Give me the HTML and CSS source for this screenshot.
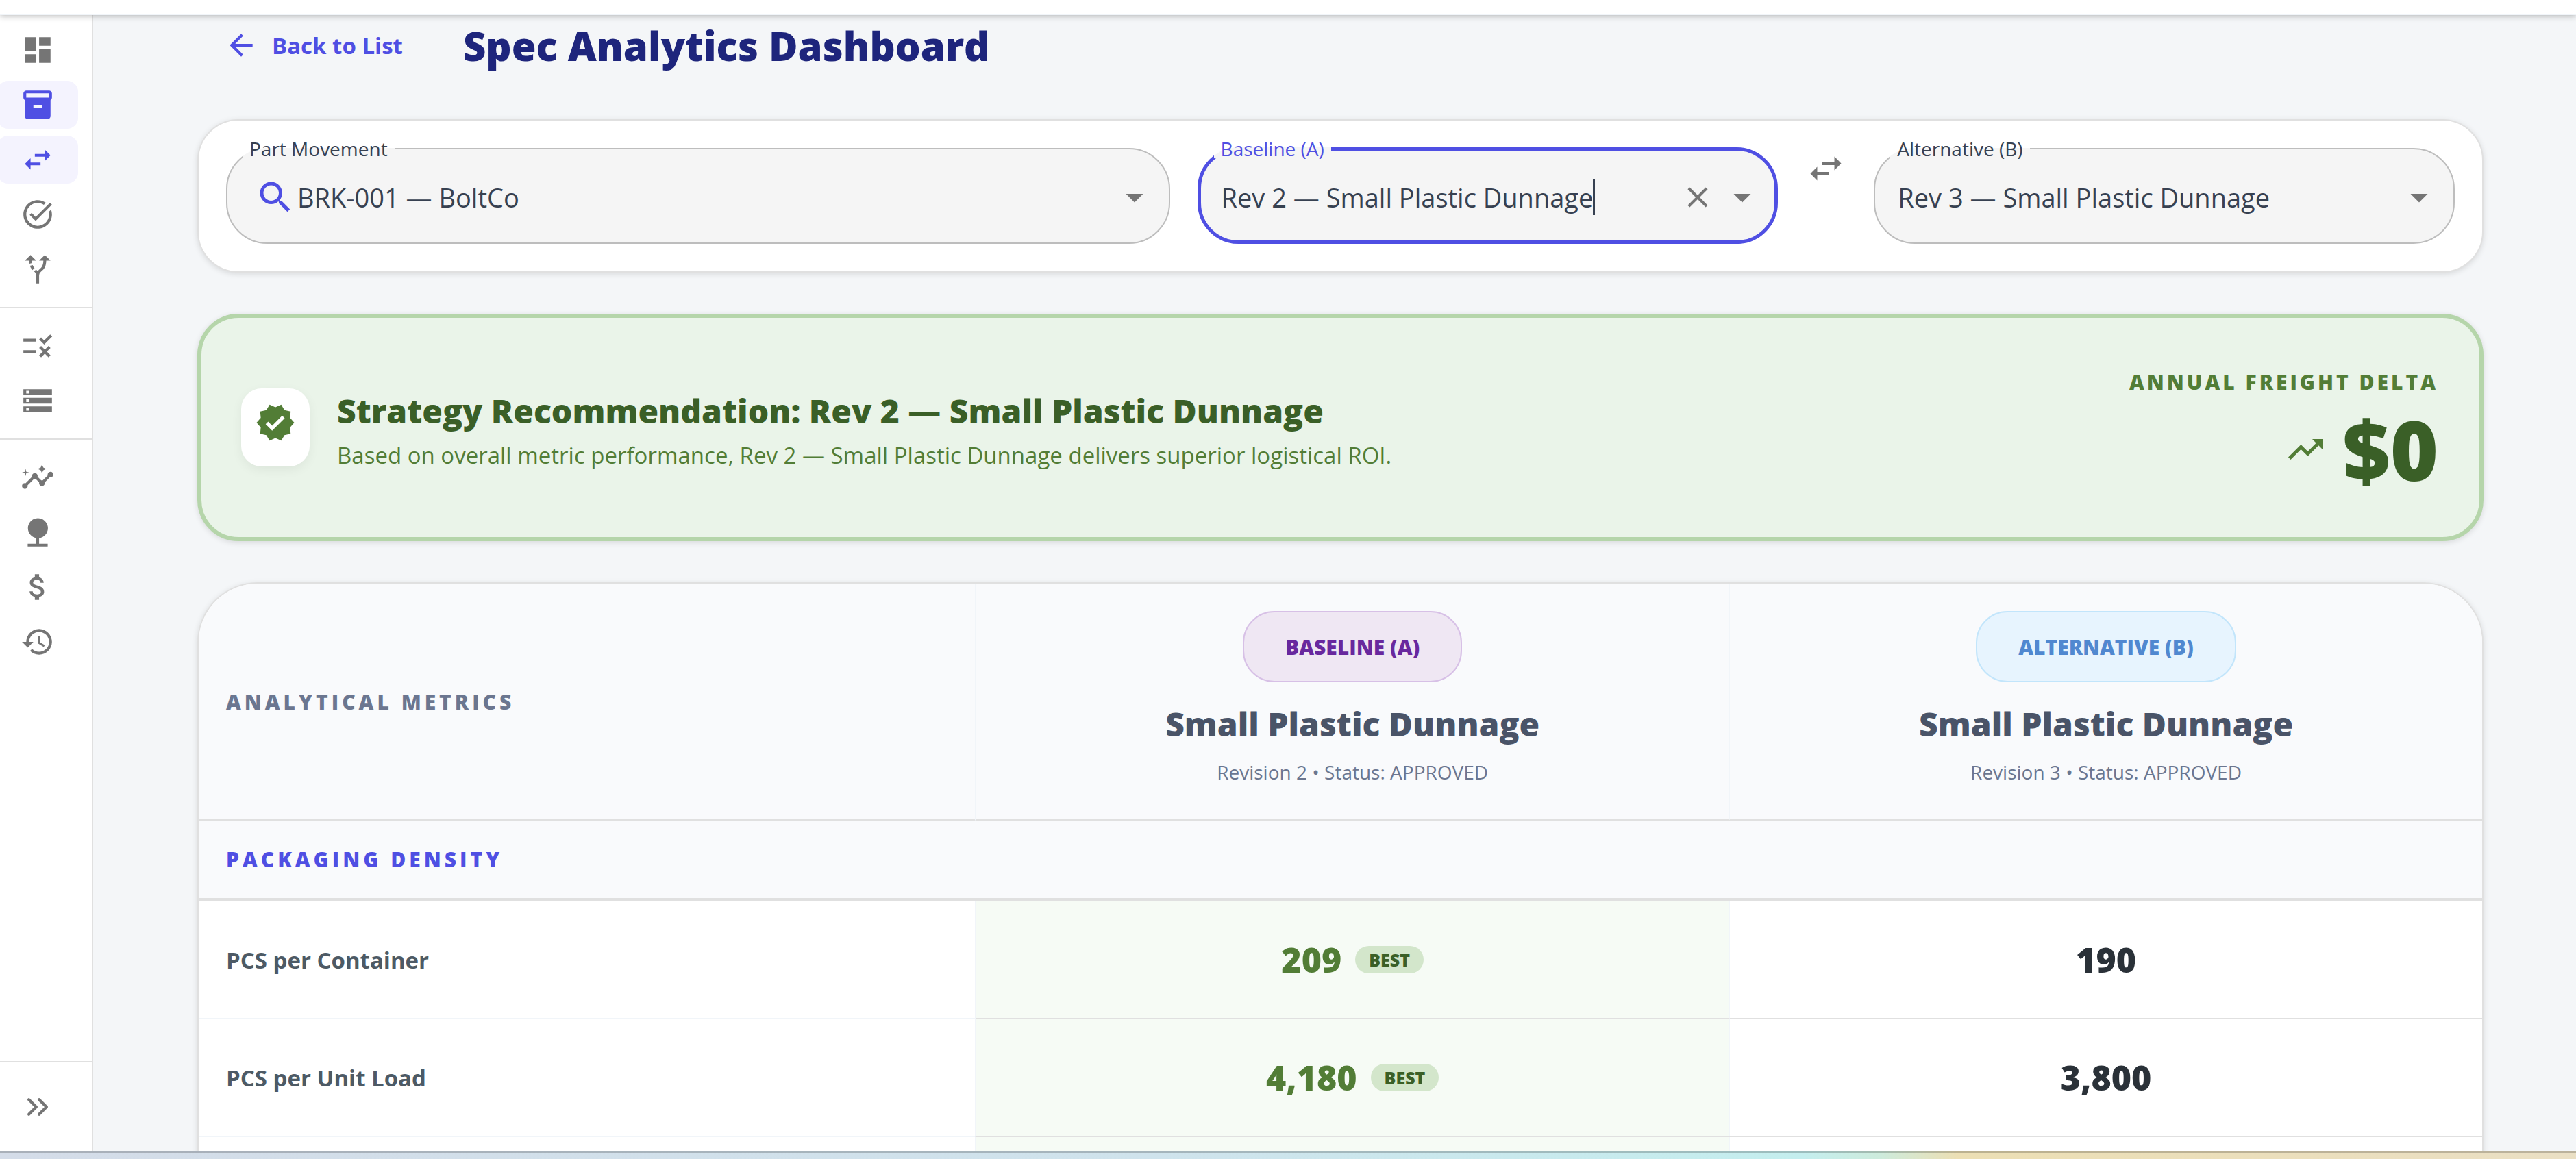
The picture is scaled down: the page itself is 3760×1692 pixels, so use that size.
FILE: index.html
```html
<!DOCTYPE html>
<html lang="en">
<head>
    <meta charset="UTF-8">
    <meta name="viewport" content="width=device-width, initial-scale=1.0">
    <title>Spec Analytics Dashboard</title>
    <link rel="stylesheet" href="styles.css">
</head>
<body>

    <header class="topbar"></header>

    <div class="shell">
        <!-- Collapsed sidebar -->
        <aside class="sidebar">
            <nav class="nav">
                <a href="#" class="nav-item" aria-label="Dashboard"><svg class="icon" viewBox="0 0 24 24"><path d="M3 13h8V3H3v10zm0 8h8v-6H3v6zm10 0h8V11h-8v10zm0-18v6h8V3h-8z"/></svg></a>
                <a href="#" class="nav-item active" aria-label="Packaging"><svg class="icon" viewBox="0 0 24 24"><path d="M20 2H4c-1 0-2 .9-2 2v3.01c0 .72.43 1.34 1 1.69V20c0 1.1 1.1 2 2 2h14c.9 0 2-.9 2-2V8.7c.57-.35 1-.97 1-1.69V4c0-1.1-1-2-2-2m-5 12H9v-2h6zm5-7H4V4l16-.02z"/></svg></a>
                <a href="#" class="nav-item active" aria-label="Compare"><svg class="icon" viewBox="0 0 24 24"><path d="M6.99 11 3 15l3.99 4v-3H14v-2H6.99v-3zM21 9l-3.99-4v3H10v2h7.01v3L21 9z"/></svg></a>
                <a href="#" class="nav-item" aria-label="Approvals"><svg class="icon" viewBox="0 0 24 24"><path d="M22 5.18 10.59 16.6l-4.24-4.24 1.41-1.41 2.83 2.83 10-10L22 5.18zm-2.21 5.04c.13.57.21 1.17.21 1.78 0 4.42-3.58 8-8 8s-8-3.58-8-8 3.58-8 8-8c1.58 0 3.04.46 4.28 1.25l1.44-1.44C16.1 2.67 14.13 2 12 2 6.48 2 2 6.48 2 12s4.48 10 10 10 10-4.48 10-10c0-1.19-.22-2.33-.6-3.39l-1.61 1.61z"/></svg></a>
                <a href="#" class="nav-item" aria-label="Routes"><svg class="icon" viewBox="0 0 24 24"><path d="m9.78 11.16-1.42 1.42c-.68-.69-1.34-1.58-1.79-2.94l1.94-.49c.32.89.77 1.5 1.27 2.01zM11 6 7 2 3 6h3.02c.02.81.08 1.54.19 2.17l1.94-.49C8.08 7.2 8.03 6.63 8.02 6H11zm10 0-4-4-4 4h2.99c-.1 3.68-1.28 4.75-2.54 5.88-.5.44-1.01.92-1.45 1.55-.34-.49-.73-.88-1.13-1.24L9.46 13.6c.93.85 1.54 1.54 1.54 3.4v5h2v-5c0-2.02.71-2.66 1.79-3.63 1.38-1.24 3.08-2.78 3.2-7.37H21z"/></svg></a>
            </nav>
            <nav class="nav">
                <a href="#" class="nav-item" aria-label="Rules"><svg class="icon" viewBox="0 0 24 24"><path d="M16.54 11 13 7.46l1.41-1.41 2.12 2.12 4.24-4.24 1.41 1.41L16.54 11zM11 7H2v2h9V7zm10 6.41L19.59 12 17 14.59 14.41 12 13 13.41 15.59 16 13 18.59 14.41 20 17 17.41 19.59 20 21 18.59 18.41 16 21 13.41zM11 15H2v2h9v-2z"/></svg></a>
                <a href="#" class="nav-item" aria-label="Storage"><svg class="icon" viewBox="0 0 24 24"><path d="M2 20h20v-4H2v4zm2-3h2v2H4v-2zM2 4v4h20V4H2zm4 3H4V5h2v2zm-4 7h20v-4H2v4zm2-3h2v2H4v-2z"/></svg></a>
            </nav>
            <nav class="nav">
                <a href="#" class="nav-item" aria-label="Insights"><svg class="icon" viewBox="0 0 24 24"><path d="M21 8c-1.45 0-2.26 1.44-1.93 2.51l-3.55 3.56c-.3-.09-.74-.09-1.04 0l-2.55-2.55C12.27 10.45 11.46 9 10 9c-1.45 0-2.27 1.44-1.93 2.52l-4.56 4.55C2.44 15.74 1 16.55 1 18c0 1.1.9 2 2 2 1.45 0 2.26-1.44 1.93-2.51l4.55-4.56c.3.09.74.09 1.04 0l2.55 2.55C12.73 16.55 13.54 18 15 18c1.45 0 2.27-1.44 1.93-2.52l3.56-3.55C21.56 12.26 23 11.45 23 10c0-1.1-.9-2-2-2z"/><path d="m15 9 .94-2.07L18 6l-2.06-.93L15 3l-.92 2.07L12 6l2.08.93zM3.5 11 4 9l2-.5L4 8l-.5-2L3 8l-2 .5L3 9z"/></svg></a>
                <a href="#" class="nav-item" aria-label="Sustainability"><svg class="icon" viewBox="0 0 24 24"><path d="M13 16.12c3.47-.41 6.17-3.36 6.17-6.95 0-3.87-3.13-7-7-7s-7 3.13-7 7c0 3.47 2.52 6.34 5.83 6.89V20H5v2h14v-2h-6v-3.88z"/></svg></a>
                <a href="#" class="nav-item" aria-label="Costs"><svg class="icon" viewBox="0 0 24 24"><path d="M11.8 10.9c-2.27-.59-3-1.2-3-2.15 0-1.09 1.01-1.85 2.7-1.85 1.78 0 2.44.85 2.5 2.1h2.21c-.07-1.72-1.12-3.3-3.21-3.81V3h-3v2.16c-1.94.42-3.5 1.68-3.5 3.61 0 2.31 1.91 3.46 4.7 4.13 2.5.6 3 1.48 3 2.41 0 .69-.49 1.79-2.7 1.79-2.06 0-2.87-.92-2.98-2.1h-2.2c.12 2.19 1.76 3.42 3.68 3.83V21h3v-2.15c1.95-.37 3.5-1.5 3.5-3.55 0-2.84-2.43-3.81-4.7-4.4z"/></svg></a>
                <a href="#" class="nav-item" aria-label="History"><svg class="icon" viewBox="0 0 24 24"><path d="M13 3c-4.97 0-9 4.03-9 9H1l3.89 3.89.07.14L9 12H6c0-3.87 3.13-7 7-7s7 3.13 7 7-3.13 7-7 7c-1.93 0-3.68-.79-4.94-2.06l-1.42 1.42C8.27 19.99 10.51 21 13 21c4.97 0 9-4.03 9-9s-4.03-9-9-9zm-1 5v5l4.28 2.54.72-1.21-3.5-2.08V8H12z"/></svg></a>
            </nav>
            <button type="button" class="expand" aria-label="Expand menu">
                <svg class="icon icon-line" viewBox="0 0 24 24"><path d="m5.8 6.8 5.2 5.2-5.2 5.2M13 6.8l5.2 5.2-5.2 5.2"/></svg>
            </button>
        </aside>

        <main class="main">
            <div class="page-head">
                <a href="#" class="back">
                    <svg class="icon" viewBox="0 0 24 24"><path d="M20 11H7.83l5.59-5.59L12 4l-8 8 8 8 1.41-1.41L7.83 13H20v-2z"/></svg>
                    Back to List
                </a>
                <h1>Spec Analytics Dashboard</h1>
            </div>

            <!-- Selectors -->
            <form class="card filters">
                <fieldset class="field">
                    <legend><label for="part">Part Movement</label></legend>
                    <div class="field-row with-icon">
                        <svg class="icon icon-lg search" viewBox="0 0 24 24"><path d="M15.5 14h-.79l-.28-.27C15.41 12.59 16 11.11 16 9.5 16 5.91 13.09 3 9.5 3S3 5.91 3 9.5 5.91 16 9.5 16c1.61 0 3.09-.59 4.23-1.57l.27.28v.79l5 4.99L20.49 19l-4.99-5zm-6 0C7.01 14 5 11.99 5 9.5S7.01 5 9.5 5 14 7.01 14 9.5 11.99 14 9.5 14z"/></svg>
                        <input type="text" id="part" value="BRK-001 — BoltCo">
                        <button type="button" class="icon-btn drop" aria-label="Open parts"><svg class="icon icon-lg" viewBox="0 0 24 24"><path d="m7 10 5 5 5-5z"/></svg></button>
                    </div>
                </fieldset>

                <fieldset class="field focused">
                    <legend><label for="baseline">Baseline (A)</label></legend>
                    <div class="field-row">
                        <input type="text" id="baseline" value="Rev 2 — Small Plastic Dunnage">
                        <span class="caret"></span>
                        <button type="button" class="icon-btn clear" aria-label="Clear"><svg class="icon" viewBox="0 0 24 24"><path d="M19 6.41 17.59 5 12 10.59 6.41 5 5 6.41 10.59 12 5 17.59 6.41 19 12 13.41 17.59 19 19 17.59 13.41 12z"/></svg></button>
                        <button type="button" class="icon-btn" aria-label="Open baselines"><svg class="icon icon-lg" viewBox="0 0 24 24"><path d="m7 10 5 5 5-5z"/></svg></button>
                    </div>
                </fieldset>

                <button type="button" class="icon-btn swap" aria-label="Swap A and B"><svg class="icon icon-lg" viewBox="0 0 24 24"><path d="M6.99 11 3 15l3.99 4v-3H14v-2H6.99v-3zM21 9l-3.99-4v3H10v2h7.01v3L21 9z"/></svg></button>

                <fieldset class="field">
                    <legend><label for="alternative">Alternative (B)</label></legend>
                    <div class="field-row">
                        <input type="text" id="alternative" value="Rev 3 — Small Plastic Dunnage">
                        <button type="button" class="icon-btn drop" aria-label="Open alternatives"><svg class="icon icon-lg" viewBox="0 0 24 24"><path d="m7 10 5 5 5-5z"/></svg></button>
                    </div>
                </fieldset>
            </form>

            <!-- Recommendation -->
            <section class="card recommend">
                <div class="badge-tile">
                    <svg class="icon icon-lg" viewBox="0 0 24 24"><path d="m23 12-2.44-2.79.34-3.69-3.61-.82-1.89-3.2L12 2.96 8.6 1.5 6.71 4.69 3.1 5.5l.34 3.7L1 12l2.44 2.79-.34 3.7 3.61.82L8.6 22.5l3.4-1.47 3.4 1.46 1.89-3.19 3.61-.82-.34-3.69L23 12zm-12.91 4.72-3.8-3.81 1.48-1.48 2.32 2.33 5.85-5.87 1.48 1.48-7.33 7.35z"/></svg>
                </div>
                <div class="recommend-text">
                    <h2>Strategy Recommendation: Rev 2 — Small Plastic Dunnage</h2>
                    <p>Based on overall metric performance, Rev 2 — Small Plastic Dunnage delivers superior logistical ROI.</p>
                </div>
                <div class="delta">
                    <div class="delta-label">ANNUAL FREIGHT DELTA</div>
                    <div class="delta-value">
                        <svg class="icon icon-lg" viewBox="0 0 24 24"><path d="m16 6 2.29 2.29-4.88 4.88-4-4L2 16.59 3.41 18l6-6 4 4 6.3-6.29L22 12V6z"/></svg>
                        <span>$0</span>
                    </div>
                </div>
            </section>

            <!-- Comparison table -->
            <div class="card compare">
                <table>
                    <thead>
                        <tr>
                            <th class="col-metric">ANALYTICAL METRICS</th>
                            <th>
                                <span class="chip chip-a">BASELINE (A)</span>
                                <div class="spec-name">Small Plastic Dunnage</div>
                                <div class="spec-info">Revision 2 • Status: APPROVED</div>
                            </th>
                            <th>
                                <span class="chip chip-b">ALTERNATIVE (B)</span>
                                <div class="spec-name">Small Plastic Dunnage</div>
                                <div class="spec-info">Revision 3 • Status: APPROVED</div>
                            </th>
                        </tr>
                    </thead>
                    <tbody>
                        <tr class="group">
                            <th colspan="3">PACKAGING DENSITY</th>
                        </tr>
                        <tr>
                            <th>PCS per Container</th>
                            <td class="win"><span class="value">209</span><span class="best">BEST</span></td>
                            <td><span class="value">190</span></td>
                        </tr>
                        <tr>
                            <th>PCS per Unit Load</th>
                            <td class="win"><span class="value">4,180</span><span class="best">BEST</span></td>
                            <td><span class="value">3,800</span></td>
                        </tr>
                        <tr>
                            <th></th>
                            <td class="win"></td>
                            <td></td>
                        </tr>
                    </tbody>
                </table>
            </div>
        </main>
    </div>

    <div class="desktop-edge"></div>

</body>
</html>
```
FILE: styles.css
```css
* {
    box-sizing: border-box;
}

body {
    margin: 0;
    height: 100vh;
    display: flex;
    flex-direction: column;
    overflow: hidden;
    font-family: "Open Sans", "Noto Sans", sans-serif;
    font-size: 33px;
    color: #374151;
    background: #f4f6f8;
}

h1, h2, p {
    margin: 0;
}

.icon {
    display: block;
    flex: none;
    width: 50px;
    height: 50px;
    fill: currentColor;
}

.icon-lg {
    width: 60px;
    height: 60px;
}

.icon-line {
    fill: none;
    stroke: currentColor;
    stroke-width: 2;
    stroke-linecap: round;
    stroke-linejoin: round;
}

.topbar {
    position: relative;
    z-index: 2;
    flex: none;
    height: 22px;
    background: #fff;
    border-bottom: 2px solid #f1f5f9;
    box-shadow: 0 2px 8px rgba(0, 0, 0, 0.25);
}

.shell {
    flex: 1;
    min-height: 0;
    display: flex;
}

/* Sidebar */
.sidebar {
    flex: none;
    width: 136px;
    display: flex;
    flex-direction: column;
    background: #fff;
    border-right: 2px solid #e0e0e0;
    overflow: hidden;
}

.nav {
    display: flex;
    flex-direction: column;
    gap: 10px;
    padding: 20px 20px 20px 0;
    border-bottom: 2px solid #e0e0e0;
}

.nav:first-child {
    padding-top: 16px;
}

.nav:nth-child(3) {
    border-bottom: none;
}

.nav-item {
    display: flex;
    align-items: center;
    justify-content: center;
    height: 70px;
    margin-left: -4px;
    border-radius: 16px;
    color: #757575;
}

.nav-item.active {
    background: #f4f3fe;
    color: #4f4fe3;
}

.expand {
    height: 131px;
    margin-top: auto;
    padding: 0 0 0 30px;
    border: none;
    border-top: 2px solid #e0e0e0;
    background: none;
    color: #757575;
    cursor: pointer;
}

/* Page */
.main {
    flex: 1;
    min-width: 0;
    display: flex;
    flex-direction: column;
    overflow: hidden;
    padding: 0 135px 0 152px;
}

.page-head {
    flex: none;
    display: flex;
    align-items: center;
    gap: 88px;
    height: 88px;
    margin-bottom: 64px;
    padding-left: 39px;
}

.back {
    display: flex;
    align-items: center;
    gap: 20px;
    color: #4f4fe3;
    font-weight: 700;
    text-decoration: none;
}

h1 {
    font-size: 58px;
    font-weight: 800;
    color: #1e257c;
}

.card {
    flex: none;
    margin-bottom: 60px;
    border: 2px solid #e0e0e0;
    border-radius: 60px;
    background: #fff;
    box-shadow: 0 2px 8px rgba(0, 0, 0, 0.12);
}

/* Filters */
.filters {
    display: grid;
    grid-template-columns: 13fr 8fr 60px 8fr;
    gap: 40px;
    padding: 27px 40px 40px;
}

.field {
    min-width: 0;
    height: 153px;
    margin: 0;
    padding: 0;
    border: 2px solid #bdbdbd;
    border-radius: 60px;
    background: #f5f5f5;
}

.field legend {
    margin-left: 22px;
    padding: 0 10px;
    font-size: 28px;
    line-height: 28px;
}

.field-row {
    display: flex;
    align-items: center;
    height: 113px;
    padding: 0 20px 0 33px;
}

.field-row.with-icon {
    padding-left: 40px;
}

.field input {
    field-sizing: content;
    min-width: 0;
    height: 60px;
    padding: 0;
    border: none;
    outline: none;
    background: none;
    font-family: inherit;
    font-size: 38px;
    color: inherit;
}

.field.focused {
    border: 5px solid #4f4fe3;
}

.field.focused legend {
    margin-left: 19px;
    color: #4f4fe3;
}

.field.focused .field-row {
    padding: 0 17px 0 30px;
}

.search {
    margin-right: 2px;
    color: #4f4fe3;
}

.caret {
    width: 3px;
    height: 53px;
    background: #374151;
}

.icon-btn {
    padding: 0;
    border: none;
    background: none;
    color: #757575;
    cursor: pointer;
}

.drop {
    margin-left: auto;
}

.clear {
    margin-left: auto;
    margin-right: 10px;
}

.swap {
    align-self: start;
    margin-top: 13px;
}

/* Recommendation */
.recommend {
    display: flex;
    align-items: center;
    gap: 40px;
    padding: 62px 60px 62px 58px;
    border: 6px solid #b5d5aa;
    background: #eaf4e9;
    color: #527d36;
}

.badge-tile {
    padding: 20px 20px 34px;
    border-radius: 30px;
    background: #fff;
    box-shadow: 0 5px 16px rgba(0, 0, 0, 0.06);
}

.recommend h2 {
    font-size: 48px;
    line-height: 82px;
    font-weight: 800;
    color: #3a5f27;
}

.recommend p {
    line-height: 48px;
}

.delta {
    margin-left: auto;
    text-align: right;
}

.delta-label {
    font-size: 30px;
    line-height: 64px;
    font-weight: 800;
    letter-spacing: 4px;
}

.delta-value {
    display: flex;
    align-items: center;
    justify-content: flex-end;
    gap: 24px;
    font-size: 120px;
    line-height: 132px;
    font-weight: 800;
}

.delta-value span {
    color: #3a5f27;
}

/* Comparison table */
.compare {
    border-radius: 88px;
    overflow: hidden;
}

table {
    width: 100%;
    table-layout: fixed;
    border-collapse: separate;
    border-spacing: 0;
}

th, td {
    padding: 0 40px;
    border-bottom: 2px solid #e0e0e0;
    border-left: 2px solid #f1f5f9;
    text-align: center;
}

th:first-child {
    border-left: none;
    text-align: left;
}

thead th {
    padding: 40px;
    background: #f9fafc;
}

.col-metric {
    width: 34%;
}

thead .col-metric,
.group th {
    font-size: 30px;
    font-weight: 800;
    letter-spacing: 5px;
    color: #6b7690;
}

.chip {
    display: inline-block;
    margin-bottom: 20px;
    padding: 27px 60px 25px;
    border: 2px solid;
    border-radius: 46px;
    font-size: 30px;
    line-height: 48px;
    font-weight: 800;
    vertical-align: top;
}

.chip-a {
    background: #efe7f3;
    border-color: #d7c0e6;
    color: #68289e;
}

.chip-b {
    background: #e7f4fe;
    border-color: #c2e5fb;
    color: #5088d0;
}

.spec-name {
    font-size: 48px;
    line-height: 82px;
    font-weight: 800;
    color: #4a5468;
}

.spec-info {
    font-size: 28px;
    line-height: 58px;
    font-weight: 400;
    color: #6b7690;
}

.group th {
    height: 118px;
    border-bottom: 5px solid #e0e0e0;
    background: #f9fafc;
    color: #4f4fe3;
}

tbody tr:not(.group) th {
    height: 172px;
    border-color: #f1f5f9;
    font-weight: 700;
    color: #4d5a65;
}

.win {
    background: #f6fbf5;
}

.value {
    font-size: 50px;
    font-weight: 800;
    color: #2a3138;
    vertical-align: middle;
}

.win .value {
    color: #527d36;
}

.best {
    display: inline-block;
    margin-left: 20px;
    padding: 0 20px;
    border-radius: 20px;
    background: #d3e6cb;
    color: #3a5f27;
    font-size: 25px;
    line-height: 40px;
    font-weight: 800;
    vertical-align: middle;
}

/* Strip of wallpaper under the window */
.desktop-edge {
    flex: none;
    height: 12px;
    border-top: 3px solid rgba(0, 0, 0, 0.2);
    background: linear-gradient(90deg, #d4dce8, #cfe3ec 45%, #c4eeee 70%, #cdebdc 73%, #ecdfb4 76%, #eadfc4);
}
```
